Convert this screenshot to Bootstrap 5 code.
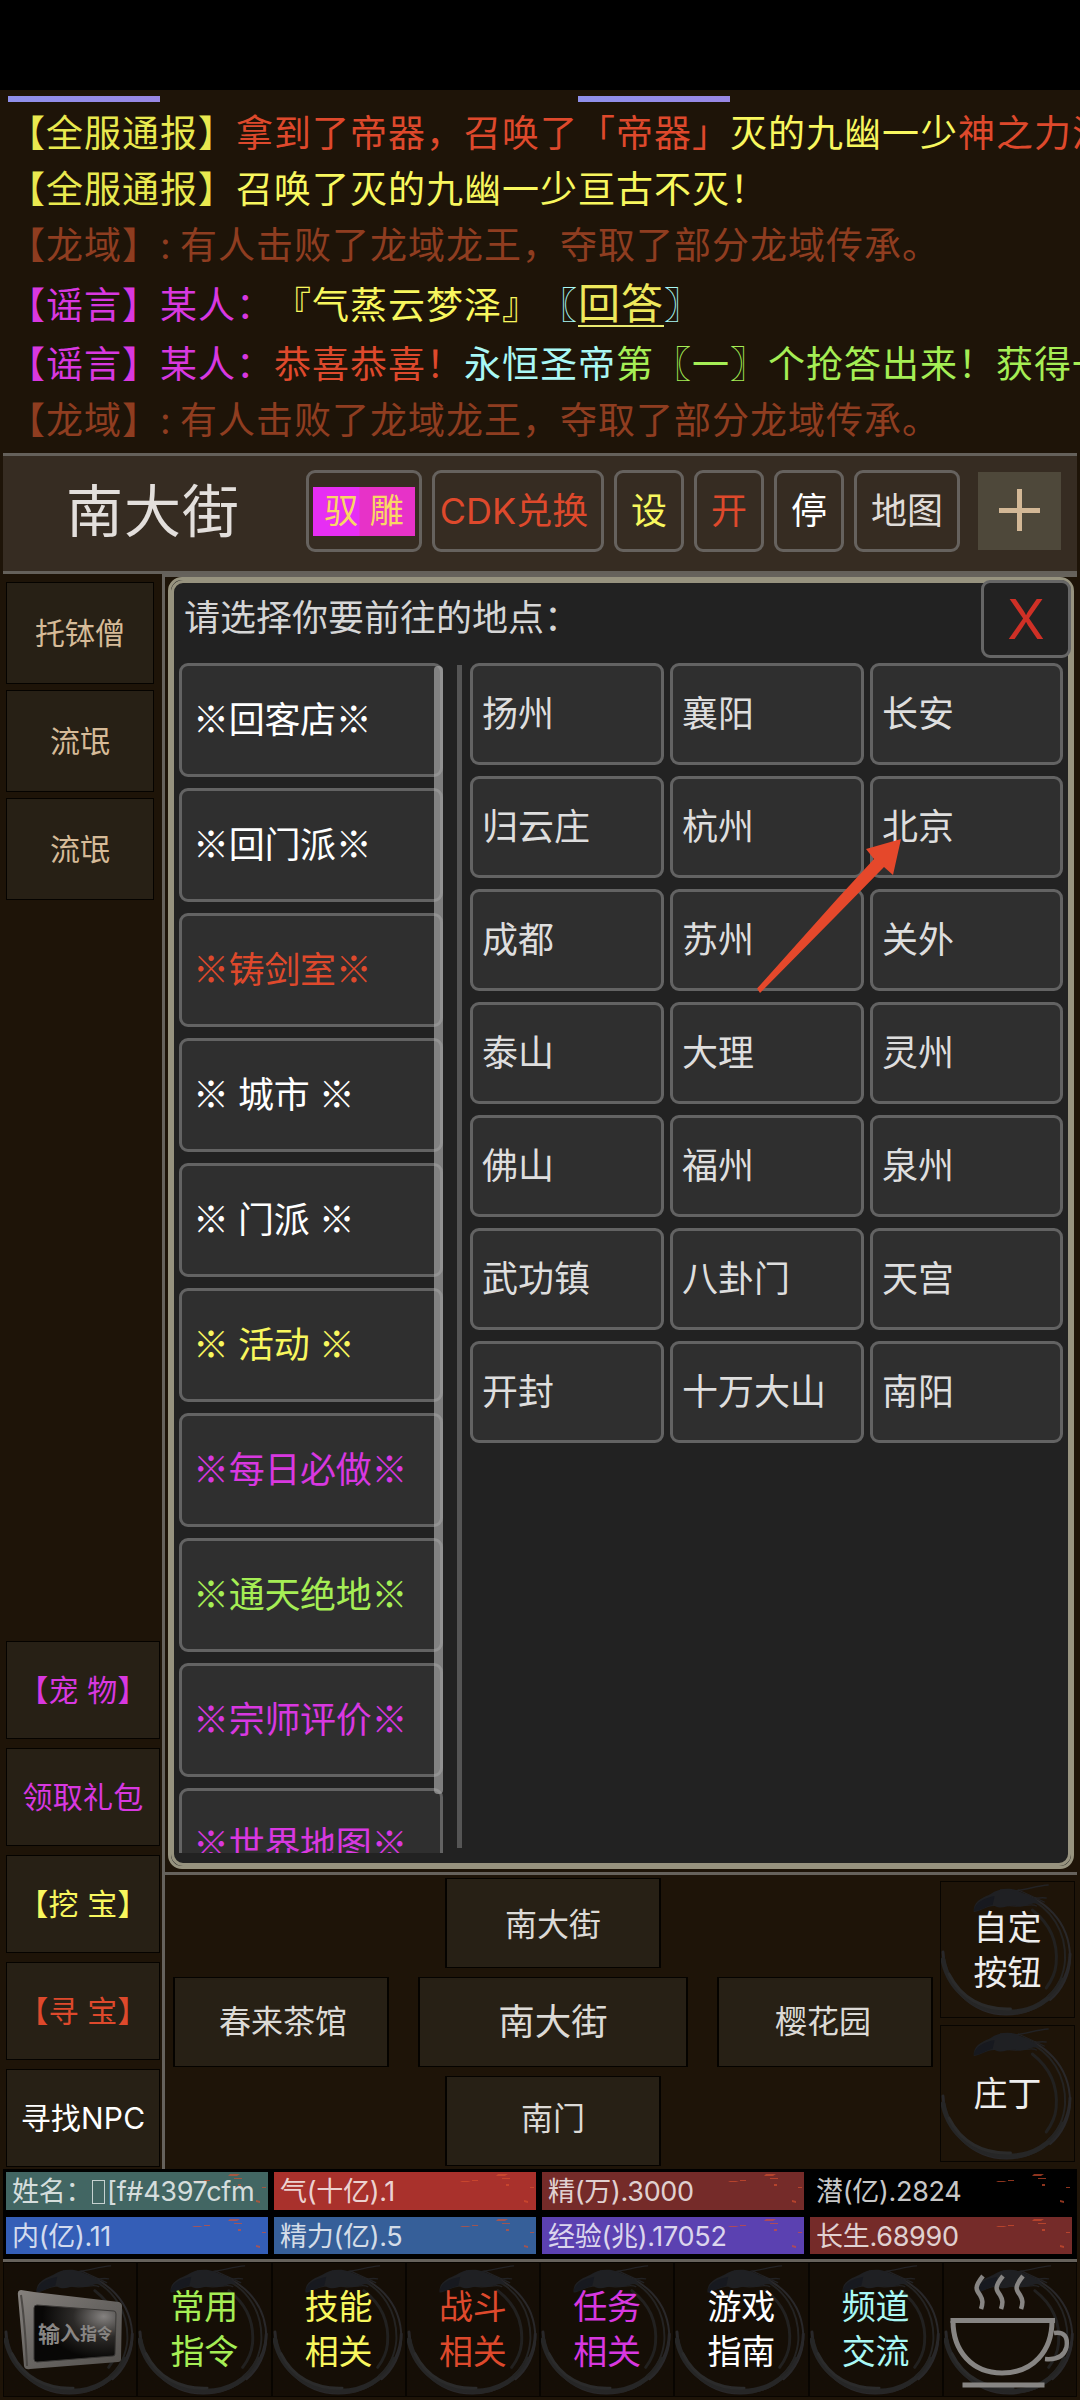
<!DOCTYPE html>
<html lang="zh-CN">
<head>
<meta charset="utf-8">
<meta name="viewport" content="width=device-width, initial-scale=1">
<title>南大街</title>
<link href="https://cdn.jsdelivr.net/npm/bootstrap@5.3.0/dist/css/bootstrap.min.css" rel="stylesheet">
<style>
body{width:1080px;height:2400px;overflow:hidden;background:#1e1408;color:#dcdcdc;font-family:Inter,"Noto Sans CJK SC",sans-serif;line-height:1;text-spacing-trim:space-all}
.status-gap{height:90px;background:#000}
.c-y{color:#f8f75e}.c-r{color:#de492c}.c-br{color:#8f3d20}.c-m{color:#d838e0}.c-c{color:#a9f8f5}.c-g{color:#a5ee55}.c-w{color:#fff}
.chat{height:363px;padding:6px 0 0 8px;font-size:37px;letter-spacing:1px;white-space:nowrap}
.chat-bars{height:8px;padding-left:0}
.chat-bars i{width:152px;height:6px;background:linear-gradient(90deg,#8f90ea,#9887e4)}
.chat-bars i+i{margin-left:418px}
.msg{height:56px;line-height:60px}
.msg.tall{height:63px;line-height:68px}
.cln{display:inline-block;width:20px}
.answer{font-size:42px;border-bottom:2px solid #eaea70;display:inline-block;line-height:42px;color:#eee85c}
.yl2{color:#e9e94f}
.topbar{margin:0 3px;height:121px;background:#362c22;border:solid #65615b;border-width:3px 0;padding-right:16px}
.place{font-size:57px;letter-spacing:1px;width:303px;padding-left:63px;line-height:111px;color:#e3dfdc}
.tbtn{height:82px;border:3px solid #66625e;border-radius:9px;font-size:36px;padding:0;line-height:1}
.hl{background:linear-gradient(90deg,#e62ef4 45%,#e732c8 46%);height:49px;width:102px;color:#f9d765;font-size:34px;word-spacing:2px}
.plus{width:83px;height:78px;background:#4e483a}
.main{height:1595px}
.side{width:162px;padding:8px 0 0 6px}
.slot{background:#272015;border:1px solid #050300;font-size:30px;padding-bottom:1px}
.npc{width:148px;height:102px;margin-bottom:6px;color:#d6bb98}
.act{width:154px;height:98px;margin-bottom:9px;letter-spacing:.2px}
.act:last-child{margin-bottom:2px}
.stage{width:915px;margin-right:3px;border-left:3px solid #66625c;border-top:3px solid #66625c}
.panel{margin:0 3px;height:1292px;border:3px solid #97937f;border-radius:14px;background:#222}
.panel-in{height:1286px;border:3px solid #97937f;border-radius:12px;background:#222;padding:0 5px}
.ask{height:80px;font-size:36px;padding-left:5px;line-height:70px;color:#d6d6d6}
.closex{position:absolute;right:0;top:0;width:90px;height:78px;border:3px solid #666;border-radius:9px;background:#222;color:#cf3026;font-size:55px}
.menu-list{width:264px;height:1190px;overflow:hidden}
.mi{height:114px;margin-bottom:11px;flex:none;border:3px solid #636363;border-radius:9px;background:#2f2f2f;font-family:"Noto Sans CJK SC",sans-serif;font-size:36px;letter-spacing:-.3px;word-spacing:1.500px;padding:0 0 6px 11px}
.thumb{position:absolute;right:0;top:3px;width:9px;height:1128px;border-radius:4px;background:rgba(170,170,170,.68)}
.vline{width:5px;height:1183px;margin:2px 8px 0 14px;background:#555}
.city-grid{display:grid;grid-template-columns:194px 194px 193px;gap:11px 6px;grid-auto-rows:102px}
.city{border:3px solid #636363;border-radius:9px;background:#2f2f2f;font-size:36px;padding:0 0 1px 9px;color:#dedede}
.mapzone{height:297px;border-top:3px solid #66625c;margin-top:3px}
.rooms{width:767px;padding:3px 0 0 8px;gap:9px}
.room{width:216px;height:90px;background:#272015;border:1px solid #050300;border-left-width:2px;border-right-width:2px;font-size:32px;color:#dcdad6}
.room.here{width:270px;font-size:36.5px}
.inkbtn{border:1px solid #080501;font-size:34px;line-height:45px;text-align:center;position:relative}
.inkbtn svg.ring{position:absolute;left:0;top:0;width:100%;height:100%}
.inkbtn span{position:relative}
.tools{width:135px;padding-top:6px;gap:7px}
.tools .inkbtn{height:137px;color:#eee}
.stats{height:90px;margin:0 3px;background:#000;padding:3px 5px 0 3px}
.stat-grid{display:grid;grid-template-columns:repeat(4,262px);gap:7px 6px;grid-auto-rows:37.5px}
.st{font-size:27px;padding-left:6px;color:rgba(255,255,255,.8);white-space:nowrap;overflow:hidden;position:relative;letter-spacing:-.3px}
.st>span{position:relative;top:1px}
.st svg{position:absolute;right:0;top:0;width:90px;height:37px}
.tofu{display:inline-block;width:13px;height:24px;border:1px solid #c5d1d0;margin:0 2px -3px 0}
.bottombar{margin:0 3px;height:138px;border-top:3px solid #66625c}
.bottombar .inkbtn{background:#150e06;width:134.25px;padding-bottom:1px}
.bottombar .art{position:absolute;left:0;top:0;width:134px;height:135px}
.arrow{position:absolute;left:740px;top:820px;width:180px;height:180px}
</style>
</head>
<body class="d-flex flex-column position-relative">
<svg width="0" height="0" class="position-absolute">
  <symbol id="ring" viewBox="0 0 134 135" preserveAspectRatio="none">
    <g fill="none" stroke="#29282a" stroke-linecap="round">
      <path d="M2 70C4 105 32 132 66 132C100 132 129 106 130 72" stroke-width="3"/>
      <path d="M2 78C8 108 34 129 66 130C92 131 112 118 122 98" stroke-width="5" stroke="#262626"/>
      <path d="M8 92C20 116 42 128 70 127" stroke-width="3" stroke="#2b2b2b"/>
      <path d="M70 10C104 14 130 40 130 76C130 92 122 108 110 118" stroke-width="2"/>
      <path d="M84 14C112 26 126 50 125 78C124 92 118 106 108 114" stroke-width="2" stroke="#242322"/>
      <path d="M92 28C110 42 118 60 116 82C115 92 112 98 106 106" stroke-width="3" stroke="#222120"/>
      <path d="M60 8C76 12 92 4 108 3M70 18C84 22 92 14 106 16M78 8L104 20M62 22C78 28 90 20 96 24" stroke-width="1.3" stroke="#222224"/>
    </g>
    <path d="M33 27C34 18 44 15 50 12C57 7 68 5 78 9C87 13 96 16 100 22C88 20 86 26 76 24C66 23 62 28 54 24C46 24 40 29 33 30Z" fill="#1f2023"/>
    <path d="M33 29C34 20 44 16 54 14L52 23C46 24 40 29 33 29Z" fill="#17191f"/>
  </symbol>
  <symbol id="spark" viewBox="0 0 90 37"><path d="M14 9h8l3 1h-9zM26 8h6v1h-6zM52 2h10l-3 2h-9zM56 6h8v1h-8zM60 12h3v2h-3zM78 28l4 1v2l-4-1zM84 15h4v1h-4z" fill="#d8502e" opacity=".65"/></symbol>
</svg>
<div class="status-gap"></div>
<section class="chat">
  <div class="chat-bars d-flex"><i></i><i></i></div>
  <div class="msg c-r"><span class="yl2">【全服通报】</span>拿到了帝器，召唤了「帝器」<span class="c-y">灭的九幽一少</span>神之力汇</div>
  <div class="msg c-y"><span class="yl2">【全服通报】</span>召唤了灭的九幽一少亘古不灭！</div>
  <div class="msg c-br">【龙域】<span class="cln">:</span>有人击败了龙域龙王，夺取了部分龙域传承。</div>
  <div class="msg tall c-m">【谣言】某人：<span class="c-y">『气蒸云梦泽』</span><span class="c-c">〖</span><span class="answer">回答</span><span class="c-c">〗</span></div>
  <div class="msg c-m">【谣言】某人：<span class="c-r">恭喜恭喜！</span><span class="c-c">永恒圣帝</span><span class="c-g">第〖一〗个抢答出来！获得一</span></div>
  <div class="msg c-br">【龙域】<span class="cln">:</span>有人击败了龙域龙王，夺取了部分龙域传承。</div>
</section>
<header class="topbar d-flex align-items-start">
  <div class="place">南大街</div>
  <nav class="d-flex" style="gap:10px;padding-top:14px">
    <button class="btn tbtn d-flex align-items-center justify-content-center" style="width:116px"><span class="hl d-flex align-items-center justify-content-center">驭 雕</span></button>
    <button class="btn tbtn c-r pe-2" style="width:172px">CDK兑换</button>
    <button class="btn tbtn c-y" style="width:70px">设</button>
    <button class="btn tbtn c-r" style="width:70px">开</button>
    <button class="btn tbtn c-w" style="width:70px">停</button>
    <button class="btn tbtn" style="width:106px;color:#e0dcd8">地图</button>
  </nav>
  <div class="plus ms-auto" style="margin-top:16px"><svg width="83" height="78"><path d="M21 38.500H62M41.500 17V59" stroke="#d3b896" stroke-width="5"/></svg></div>
</header>
<main class="main d-flex">
  <aside class="side d-flex flex-column">
    <div class="slot npc d-flex align-items-center justify-content-center">托钵僧</div>
    <div class="slot npc d-flex align-items-center justify-content-center">流氓</div>
    <div class="slot npc d-flex align-items-center justify-content-center">流氓</div>
    <div class="slot act mt-auto d-flex align-items-center justify-content-center c-m">【宠 物】</div>
    <div class="slot act d-flex align-items-center justify-content-center c-m">领取礼包</div>
    <div class="slot act d-flex align-items-center justify-content-center c-y">【挖 宝】</div>
    <div class="slot act d-flex align-items-center justify-content-center c-r">【寻 宝】</div>
    <div class="slot act d-flex align-items-center justify-content-center c-w">寻找NPC</div>
  </aside>
  <div class="stage">
    <div class="panel position-relative">
      <div class="panel-in">
        <div class="ask">请选择你要前往的地点：</div>
        <div class="d-flex">
          <div class="menu-list d-flex flex-column flex-shrink-0 position-relative">
            <div class="mi d-flex align-items-center c-w">※回客店※</div>
            <div class="mi d-flex align-items-center c-w">※回门派※</div>
            <div class="mi d-flex align-items-center c-r">※铸剑室※</div>
            <div class="mi d-flex align-items-center c-w">※ 城市 ※</div>
            <div class="mi d-flex align-items-center c-w">※ 门派 ※</div>
            <div class="mi d-flex align-items-center c-y">※ 活动 ※</div>
            <div class="mi d-flex align-items-center c-m">※每日必做※</div>
            <div class="mi d-flex align-items-center c-g">※通天绝地※</div>
            <div class="mi d-flex align-items-center c-m">※宗师评价※</div>
            <div class="mi d-flex align-items-center c-m">※世界地图※</div>
            <div class="thumb"></div>
          </div>
          <div class="vline flex-shrink-0"></div>
          <div class="city-grid align-content-start">
            <div class="city d-flex align-items-center">扬州</div><div class="city d-flex align-items-center">襄阳</div><div class="city d-flex align-items-center">长安</div>
            <div class="city d-flex align-items-center">归云庄</div><div class="city d-flex align-items-center">杭州</div><div class="city d-flex align-items-center">北京</div>
            <div class="city d-flex align-items-center">成都</div><div class="city d-flex align-items-center">苏州</div><div class="city d-flex align-items-center">关外</div>
            <div class="city d-flex align-items-center">泰山</div><div class="city d-flex align-items-center">大理</div><div class="city d-flex align-items-center">灵州</div>
            <div class="city d-flex align-items-center">佛山</div><div class="city d-flex align-items-center">福州</div><div class="city d-flex align-items-center">泉州</div>
            <div class="city d-flex align-items-center">武功镇</div><div class="city d-flex align-items-center">八卦门</div><div class="city d-flex align-items-center">天宫</div>
            <div class="city d-flex align-items-center">开封</div><div class="city d-flex align-items-center">十万大山</div><div class="city d-flex align-items-center">南阳</div>
          </div>
        </div>
      </div>
      <div class="closex d-flex align-items-center justify-content-center">X</div>
    </div>
    <div class="mapzone d-flex">
      <div class="rooms d-flex flex-column">
        <div class="room d-flex align-items-center justify-content-center pt-1" style="margin-left:272px">南大街</div>
        <div class="d-flex justify-content-between" style="width:760px">
          <div class="room d-flex align-items-center justify-content-center ps-1">春来茶馆</div>
          <div class="room here d-flex align-items-center justify-content-center">南大街</div>
          <div class="room d-flex align-items-center justify-content-center pe-1">樱花园</div>
        </div>
        <div class="room d-flex align-items-center justify-content-center pb-1" style="margin-left:272px">南门</div>
      </div>
      <div class="tools d-flex flex-column ms-2">
        <div class="inkbtn d-flex align-items-center justify-content-center"><svg class="ring"><use href="#ring"/></svg><span>自定<br>按钮</span></div>
        <div class="inkbtn d-flex align-items-center justify-content-center"><svg class="ring"><use href="#ring"/></svg><span>庄丁</span></div>
      </div>
    </div>
  </div>
</main>
<section class="stats">
  <div class="stat-grid">
    <div class="st d-flex align-items-center" style="background:#426663"><svg><use href="#spark"/></svg><span>姓名：<i class="tofu"></i>[f#4397cfm</span></div>
    <div class="st d-flex align-items-center" style="background:#a9312c"><svg><use href="#spark"/></svg><span>气(十亿).1</span></div>
    <div class="st d-flex align-items-center" style="background:#752b29"><svg><use href="#spark"/></svg><span>精(万).3000</span></div>
    <div class="st d-flex align-items-center" style="background:#000"><svg><use href="#spark"/></svg><span>潜(亿).2824</span></div>
    <div class="st d-flex align-items-center" style="background:#345eb7"><svg><use href="#spark"/></svg><span>内(亿).11</span></div>
    <div class="st d-flex align-items-center" style="background:#365f99"><svg><use href="#spark"/></svg><span>精力(亿).5</span></div>
    <div class="st d-flex align-items-center" style="background:#5b41b1"><svg><use href="#spark"/></svg><span>经验(兆).17052</span></div>
    <div class="st d-flex align-items-center" style="background:#752b29"><svg><use href="#spark"/></svg><span>长生.68990</span></div>
  </div>
</section>
<footer class="bottombar d-flex">
  <div class="inkbtn"><svg class="ring"><use href="#ring"/></svg>
    <svg class="art" viewBox="0 0 134 135">
      <defs><linearGradient id="tvf" x1="0" y1="0" x2="1" y2="1"><stop offset="0" stop-color="#85817d"/><stop offset=".5" stop-color="#686562"/><stop offset="1" stop-color="#54514e"/></linearGradient>
      <radialGradient id="tvs" cx=".85" cy=".2" r=".75"><stop offset="0" stop-color="#858280"/><stop offset=".5" stop-color="#2c2a28"/><stop offset="1" stop-color="#080706"/></radialGradient></defs>
      <path d="M17 27L30 29L115 39Q118 40 118 43L117 96Q117 99 114 99L26 106Q21 107 20 103L14 33Q13 27 17 27Z" fill="url(#tvf)"/>
      <path d="M17 32Q21 60 23 103" fill="none" stroke="#4c4946" stroke-width="2"/>
      <path d="M33 42L110 48Q112 48 112 51L111 91Q111 93 109 93L33 99Q30 99 30 96V45Q30 42 33 42Z" fill="url(#tvs)" stroke="#3a3836"/>
      <g fill="#898684" font-weight="700" font-family="Noto Sans CJK SC,sans-serif"><text x="34" y="79" font-size="22">输</text><text x="56" y="78" font-size="20">入</text><text x="76" y="77" font-size="17">指</text><text x="93" y="76" font-size="15">令</text></g>
    </svg></div>
  <div class="inkbtn d-flex align-items-center justify-content-center c-g"><svg class="ring"><use href="#ring"/></svg><span>常用<br>指令</span></div>
  <div class="inkbtn d-flex align-items-center justify-content-center c-y"><svg class="ring"><use href="#ring"/></svg><span>技能<br>相关</span></div>
  <div class="inkbtn d-flex align-items-center justify-content-center c-r"><svg class="ring"><use href="#ring"/></svg><span>战斗<br>相关</span></div>
  <div class="inkbtn d-flex align-items-center justify-content-center c-m"><svg class="ring"><use href="#ring"/></svg><span>任务<br>相关</span></div>
  <div class="inkbtn d-flex align-items-center justify-content-center c-w"><svg class="ring"><use href="#ring"/></svg><span>游戏<br>指南</span></div>
  <div class="inkbtn d-flex align-items-center justify-content-center c-c"><svg class="ring"><use href="#ring"/></svg><span>频道<br>交流</span></div>
  <div class="inkbtn"><svg class="ring"><use href="#ring"/></svg>
    <svg class="art" viewBox="0 0 134 135" fill="none" stroke="#878583" stroke-width="5">
      <path d="M6.500 57.500H111M18.500 122H100.500"/>
      <path d="M9 58C9 88 28 110 58 110C89 110 108 88 108 58"/>
      <path d="M110 70C121 68 124 75 122.500 84C120 94 112 97 101 96" stroke-width="4.500"/>
      <path d="M39 13C30 24 32 27 36 32C39 37 39 40 37 46M59 13C50 24 52 27 56 32C59 37 59 40 57 46M79 13C70 24 72 27 76 32C79 37 79 40 77 46" stroke-width="4.500"/>
    </svg></div>
</footer>
<svg class="arrow" viewBox="740 820 180 180"><path d="M901 839L866 849L874 859L838 898L757 988.500L760 993L836 916L884 867L893 875Z" fill="#e5482b"/></svg>
<script src="https://cdn.jsdelivr.net/npm/bootstrap@5.3.0/dist/js/bootstrap.bundle.min.js"></script>
</body>
</html>
